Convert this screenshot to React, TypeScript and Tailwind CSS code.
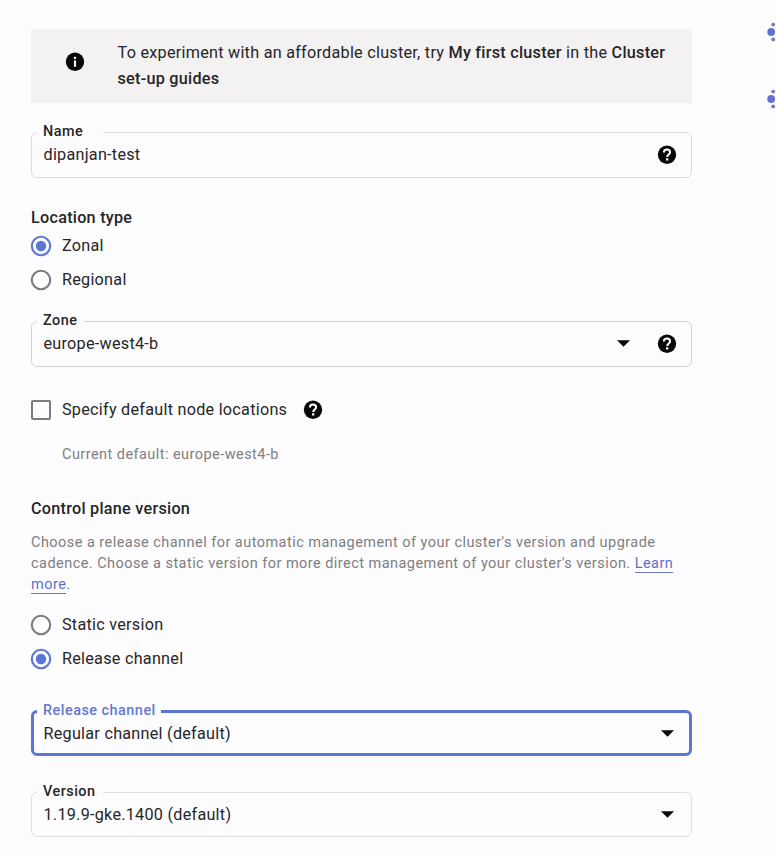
import type { ReactNode } from "react";

function HelpIcon() {
  return (
    <svg viewBox="0 0 20 20" className="h-5 w-5 shrink-0">
      <circle cx="10" cy="9.8" r="9.2" fill="#080808" />
      <path d="M6.9 7.6C6.9 5.6 8.3 4.5 10 4.5s3.1 1.1 3.1 2.8c0 2.1-2.9 2.4-2.9 4.7" fill="none" stroke="#fff" strokeWidth="2" />
      <rect x="9" y="13.3" width="2.3" height="2.2" fill="#fff" />
    </svg>
  );
}

function InfoIcon() {
  return (
    <svg viewBox="0 0 20 20" className="h-5 w-5 shrink-0">
      <circle cx="10" cy="9.8" r="9.2" fill="#080808" />
      <rect x="8.9" y="4.8" width="2.2" height="2.2" fill="#f3f1f2" />
      <rect x="8.9" y="8.4" width="2.2" height="6.4" fill="#f3f1f2" />
    </svg>
  );
}

function Caret() {
  return (
    <svg viewBox="0 0 12 6" className="h-[7px] w-[13px] shrink-0">
      <path d="M0 0h12L6 6z" fill="#080808" />
    </svg>
  );
}

function Radio({ label, checked = false }: { label: string; checked?: boolean }) {
  return (
    <label className="flex h-[34px] items-center">
      <svg viewBox="0 0 20 20" className="mr-[11px] h-5 w-5 overflow-visible">
        <circle cx="10" cy="10" r="9.2" fill="none" stroke={checked ? "#5c76d6" : "#7c7c7c"} strokeWidth="2.1" />
        {checked && <circle cx="10" cy="10" r="5.2" fill="#5c76d6" />}
      </svg>
      <span>{label}</span>
    </label>
  );
}

type FieldProps = {
  label: string;
  value: string;
  className: string;
  legendClass: string;
  valueClass?: string;
  children: ReactNode;
};

function Field({ label, value, className, legendClass, valueClass = "pl-[11.5px]", children }: FieldProps) {
  return (
    <fieldset className={`min-w-0 rounded-[6px] ${className}`}>
      <legend className={`h-5 pl-[6px] text-[14.4px] leading-[19px] font-medium tracking-[0.5px] ${legendClass}`}>{label}</legend>
      <div className={`flex h-[25px] items-center pr-[14px] ${valueClass}`}>
        <span className="flex-1 pt-[2px]">{value}</span>
        {children}
      </div>
    </fieldset>
  );
}

function NodeDots() {
  return (
    <svg viewBox="0 0 9 20" className="h-5 w-[9px]">
      <circle cx="4.2" cy="10" r="3.9" fill="#6272cf" />
      <circle cx="6.2" cy="2.6" r="1.9" fill="#6b78c4" />
      <circle cx="6.2" cy="17.4" r="1.9" fill="#6b78c4" />
    </svg>
  );
}

export default function App() {
  return (
    <div className="flex h-[856px] w-[776px] justify-between overflow-hidden bg-[#fdfcfe] pl-[31px] font-[Roboto,sans-serif] text-[16.2px] tracking-[0.26px] whitespace-nowrap text-[#262626]">
      <main className="flex w-[661px] flex-col pt-[29px]">
        <section className="flex h-[74px] items-start bg-[#f3f1f2] pt-[11px] pl-[34px] leading-[26px]">
          <div className="mt-[12px] mr-[32.5px]">
            <InfoIcon />
          </div>
          <p>
            To experiment with an affordable cluster, try <b className="font-medium">My first cluster</b> in the{" "}
            <b className="font-medium">Cluster</b>
            <br />
            <b className="font-medium">set-up guides</b>
          </p>
        </section>

        <Field label="Name" value="dipanjan-test" className="mt-[19px] h-[56px] border border-[#dcdadd]" legendClass="ml-[5px] w-[66px]">
          <HelpIcon />
        </Field>

        <h2 className="mt-[28px] h-6 leading-6 font-medium">Location type</h2>
        <div className="-mt-px h-[68px]">
          <Radio label="Zonal" checked />
          <Radio label="Regional" />
        </div>

        <Field label="Zone" value="europe-west4-b" className="mt-[14px] h-[56px] border border-[#d4d2d5]" legendClass="ml-[5px] w-[47px]">
          <Caret />
          <span className="w-[27px]" />
          <HelpIcon />
        </Field>

        <label className="mt-[31px] flex h-6 items-center">
          <span className="mr-[11px] h-5 w-5 rounded-[2px] border-2 border-[#7c7c7c]" />
          <span className="mr-4">Specify default node locations</span>
          <HelpIcon />
        </label>
        <p className="mt-[23px] h-5 pl-[31px] text-[14.5px] leading-5 tracking-[0.45px] text-[#808080]">Current default: europe-west4-b</p>

        <h2 className="mt-[32px] h-6 leading-6 font-medium">Control plane version</h2>
        <p className="mt-[11px] h-[63px] text-[14.5px] leading-[21px] tracking-[0.455px] text-[#7e7e7e]">
          Choose a release channel for automatic management of your cluster's version and upgrade
          <br />
          cadence. Choose a static version for more direct management of your cluster's version.{" "}
          <a className="border-b border-[#6b78c8] text-[#5f6fc8]">Learn</a>
          <br />
          <a className="border-b border-[#6b78c8] text-[#5f6fc8]">more</a>.
        </p>
        <div className="mt-[13px] h-[68px]">
          <Radio label="Static version" />
          <Radio label="Release channel" checked />
        </div>

        <Field label="Release channel" value="Regular channel (default)" className="mt-[25px] h-[55px] border-[3px] border-[#5c76d6]" legendClass="ml-[3px] w-[124px] text-[#6478d2]" valueClass="pl-[9.5px]">
          <Caret />
          <span className="w-px" />
        </Field>

        <Field label="Version" value="1.19.9-gke.1400 (default)" className="mt-[26px] h-[55px] border border-[#e0dee1]" legendClass="ml-[5px] w-[66px]">
          <Caret />
          <span className="w-[3px]" />
        </Field>
      </main>

      <aside className="flex flex-col gap-[47px] pt-[22px]">
        <NodeDots />
        <NodeDots />
      </aside>
    </div>
  );
}
